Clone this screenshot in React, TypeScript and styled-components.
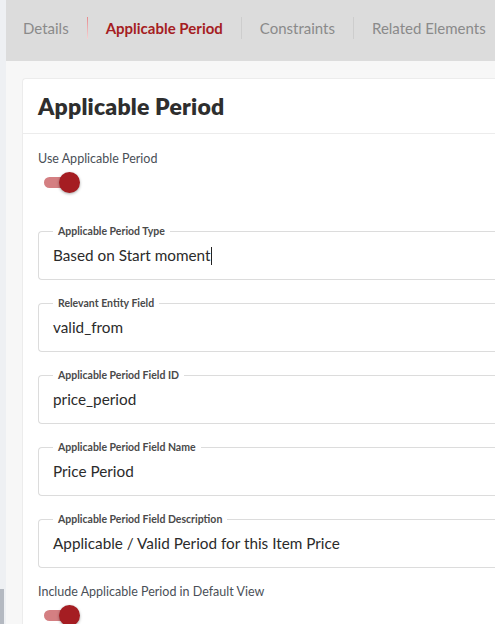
import styled, { createGlobalStyle } from "styled-components";

const GlobalStyle = createGlobalStyle`
  html, body {
    margin: 0;
    padding: 0;
    overflow: hidden;
    background: #eef0f3;
  }
  body {
    font-family: Lato, "Open Sans", sans-serif;
  }
`;

const Shell = styled.div`
  display: flex;
  width: 540px;
  height: 624px;
  overflow: hidden;
`;

const SideStrip = styled.div`
  width: 6px;
  flex-shrink: 0;
  background: #eef0f3;
  display: flex;
  flex-direction: column;
  justify-content: flex-end;
`;

const ScrollThumb = styled.div`
  width: 4px;
  height: 35px;
  background: #b4b9c1;
`;

const Main = styled.div`
  flex: 1;
  background: #f7f7f7;
  display: flex;
  flex-direction: column;
  overflow: hidden;
`;

const TabBar = styled.div`
  flex-shrink: 0;
  height: 61px;
  background: #dcdcdc;
  display: flex;
  align-items: center;
  padding-left: 17px;
  padding-bottom: 6px;
  box-sizing: border-box;
`;

const Tab = styled.div<{ $active?: boolean }>`
  font-size: 15px;
  color: ${(p) => (p.$active ? "#a51d22" : "#8a8a8a")};
  font-weight: ${(p) => (p.$active ? 700 : 400)};
  white-space: nowrap;
`;

const TabDivider = styled.div<{ $red?: boolean }>`
  width: 1px;
  height: 22px;
  margin: 0 18px;
  background: ${(p) => (p.$red ? "linear-gradient(#e58a8d, #f6d2d3)" : "#cdcdcd")};
`;

const Body = styled.div`
  flex: 1;
  padding: 17px 0 0 16px;
  display: flex;
`;

const Card = styled.div`
  flex: 1;
  background: #fff;
  border: 1px solid #ececec;
  border-right: none;
  border-bottom: none;
  border-radius: 4px 0 0 0;
`;

const CardHeader = styled.div`
  height: 54px;
  border-bottom: 1px solid #ececec;
  display: flex;
  align-items: center;
  padding-left: 15px;
`;

const Title = styled.h2`
  margin: 0;
  font-size: 23px;
  font-weight: 800;
  color: #2e2e2e;
  letter-spacing: 0.2px;
`;

const CardBody = styled.div`
  padding: 17px 0 0 15px;
`;

const SwitchLabel = styled.div`
  font-size: 12.5px;
  color: #4a4f57;
`;

const Switch = styled.div`
  position: relative;
  width: 26px;
  height: 11px;
  border-radius: 6px;
  background: #d47f82;
  margin: 11px 0 0 6px;
`;

const Thumb = styled.div`
  position: absolute;
  right: -10px;
  top: -5px;
  width: 21px;
  height: 21px;
  border-radius: 50%;
  background: #a51d22;
  box-shadow: 0 1px 3px rgba(0, 0, 0, 0.35);
`;

const Fields = styled.div`
  display: flex;
  flex-direction: column;
  gap: 17px;
  margin: 37px 0 16px;
`;

const Field = styled.fieldset`
  box-sizing: border-box;
  margin: 0;
  padding: 0 0 0 14px;
  height: 55px;
  border: 1px solid #dcdcdc;
  border-right: none;
  border-radius: 4px 0 0 4px;
  min-width: 0;
`;

const Legend = styled.legend`
  font-size: 10.5px;
  font-weight: 700;
  color: #4a4a4a;
  padding: 0 5px;
  margin-left: 0;
`;

const Value = styled.div`
  font-size: 15.3px;
  color: #2b2b2b;
  margin-top: 9px;
  white-space: nowrap;
`;

const Caret = styled.span`
  display: inline-block;
  width: 1px;
  height: 18px;
  background: #222;
  vertical-align: -4px;
`;

const fields = [
  { label: "Applicable Period Type", value: "Based on Start moment", caret: true },
  { label: "Relevant Entity Field", value: "valid_from" },
  { label: "Applicable Period Field ID", value: "price_period" },
  { label: "Applicable Period Field Name", value: "Price Period" },
  { label: "Applicable Period Field Description", value: "Applicable / Valid Period for this Item Price" },
];

export default function App() {
  return (
    <>
      <GlobalStyle />
      <Shell>
        <SideStrip>
          <ScrollThumb />
        </SideStrip>
        <Main>
          <TabBar>
            <Tab>Details</Tab>
            <TabDivider $red />
            <Tab $active>Applicable Period</Tab>
            <TabDivider />
            <Tab>Constraints</Tab>
            <TabDivider />
            <Tab>Related Elements</Tab>
          </TabBar>
          <Body>
            <Card>
              <CardHeader>
                <Title>Applicable Period</Title>
              </CardHeader>
              <CardBody>
                <SwitchLabel>Use Applicable Period</SwitchLabel>
                <Switch>
                  <Thumb />
                </Switch>
                <Fields>
                  {fields.map((f) => (
                    <Field key={f.label}>
                      <Legend>{f.label}</Legend>
                      <Value>
                        {f.value}
                        {f.caret && <Caret />}
                      </Value>
                    </Field>
                  ))}
                </Fields>
                <SwitchLabel>Include Applicable Period in Default View</SwitchLabel>
                <Switch>
                  <Thumb />
                </Switch>
              </CardBody>
            </Card>
          </Body>
        </Main>
      </Shell>
    </>
  );
}
